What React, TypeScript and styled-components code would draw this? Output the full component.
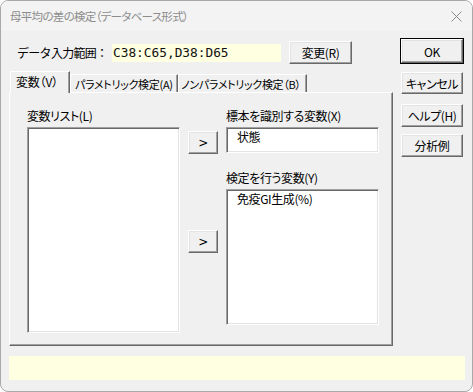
import React from "react";
import styled, { createGlobalStyle, css } from "styled-components";

const Global = createGlobalStyle`
  html, body { margin: 0; padding: 0; background: #ffffff; }
  * { box-sizing: border-box; }
`;

const FONT = `"Noto Sans CJK JP", "Noto Sans", sans-serif`;

const Window = styled.div`
  width: 473px;
  height: 392px;
  border: 1px solid #a9a9a9;
  border-radius: 8px;
  background: #f0f0f0;
  overflow: hidden;
  display: flex;
  flex-direction: column;
  font-family: ${FONT};
  font-feature-settings: "palt";
  color: #000;
`;

const TitleBar = styled.div`
  height: 30px;
  flex: none;
  display: flex;
  align-items: center;
  justify-content: space-between;
  padding: 0 10px 0 9px;
  background: #f3f3f3;
`;

const Title = styled.span`
  font-size: 11.5px;
  color: #8c8c8c;
  letter-spacing: -0.7px;
`;

const CloseIcon = styled.svg`
  width: 11px;
  height: 11px;
  flex: none;
`;

const Body = styled.div`
  flex: 1;
  display: grid;
  grid-template-columns: 384px 62px;
  column-gap: 8px;
  padding: 8px 0 0 8px;
`;

const MainCol = styled.div`
  display: flex;
  flex-direction: column;
`;

const RangeRow = styled.div`
  display: flex;
  align-items: center;
  height: 23px;
  margin-top: 2px;
  padding-left: 8px;
`;

const RangeLabel = styled.span`
  font-size: 12px;
  letter-spacing: -0.7px;
  font-feature-settings: normal;
  width: 95px;
  flex: none;
`;

const RangeValue = styled.div`
  width: 169px;
  height: 18px;
  flex: none;
  background: #ffffe1;
  padding-left: 1px;
  font-family: "DejaVu Sans Mono", "Liberation Mono", monospace;
  font-size: 12.8px;
  line-height: 18px;
  color: #111;
  white-space: nowrap;
  overflow: hidden;
`;

const bevel = css`
  border: 1px solid;
  border-color: #ffffff #696969 #696969 #ffffff;
  box-shadow: inset -1px -1px 0 #a0a0a0, inset 1px 1px 0 #e3e3e3;
  background: #f0f0f0;
`;

const Button = styled.button<{ $w?: number; $h?: number; $default?: boolean }>`
  ${bevel};
  width: ${(p) => p.$w ?? 62}px;
  height: ${(p) => p.$h ?? 23}px;
  padding: 0;
  font-family: ${FONT};
  font-feature-settings: "palt";
  font-size: 12px;
  letter-spacing: -0.4px;
  color: #000;
  display: flex;
  align-items: center;
  justify-content: center;
  ${(p) =>
    p.$default &&
    css`
      outline: 1px solid #000;
      outline-offset: 0;
    `}
`;

const ChangeButton = styled(Button)`
  margin-left: 8px;
`;

const TabStrip = styled.div`
  display: flex;
  align-items: flex-end;
  height: 21px;
  margin-top: 7px;
  padding-left: 1px;
  position: relative;
  z-index: 1;
`;

const Tab = styled.div<{ $w: number; $pl: number; $active?: boolean }>`
  width: ${(p) => p.$w}px;
  height: 18px;
  font-size: 11px;
  letter-spacing: -0.3px;
  display: flex;
  align-items: center;
  padding-left: ${(p) => p.$pl}px;
  border-left: 1px solid #ffffff;
  border-top: 1px solid #ffffff;
  border-right: 1px solid #696969;
  box-shadow: inset -1px 0 0 #a0a0a0;
  background: #f0f0f0;
  white-space: nowrap;
  overflow: hidden;
  ${(p) =>
    p.$active &&
    css`
      margin-bottom: -1px;
      height: 22px;
      padding-bottom: 2px;
      font-size: 12px;
      letter-spacing: -0.2px;
    `}
`;

const Panel = styled.div`
  height: 254px;
  border-top: 1px solid #ffffff;
  border-left: 1px solid #ffffff;
  border-right: 1px solid #696969;
  border-bottom: 1px solid #696969;
  box-shadow: inset -1px -1px 0 #a0a0a0;
  display: flex;
  padding: 15px 0 0 17px;
`;

const Column = styled.div<{ $w: number }>`
  width: ${(p) => p.$w}px;
  display: flex;
  flex-direction: column;
`;

const Label = styled.div<{ $mt?: number }>`
  font-size: 12px;
  letter-spacing: -0.4px;
  height: 19px;
  line-height: 15px;
  margin-top: ${(p) => p.$mt ?? 0}px;
  white-space: nowrap;
`;

const ListBox = styled.div<{ $h: number }>`
  height: ${(p) => p.$h}px;
  background: #ffffff;
  border-top: 1px solid #a0a0a0;
  border-left: 1px solid #a0a0a0;
  border-right: 1px solid #ffffff;
  border-bottom: 1px solid #ffffff;
  box-shadow: inset 1px 1px 0 #696969, inset -1px -1px 0 #e3e3e3;
  padding: 1px 0 0 10px;
  font-size: 12px;
  letter-spacing: -0.4px;
  line-height: 15px;
`;

const MoveCol = styled.div`
  width: 30px;
  margin: 0 8px;
  display: flex;
  flex-direction: column;
  padding-top: 23px;
  gap: 76px;
`;

const SideCol = styled.div`
  display: flex;
  flex-direction: column;
`;

const SideButton = styled(Button)<{ $mt: number }>`
  margin-top: ${(p) => p.$mt}px;
`;

const StatusBar = styled.div`
  height: 24px;
  margin: 10px 7px 11px 8px;
  background: #ffffe1;
`;

const Arrow = styled.span`
  font-family: "DejaVu Sans", sans-serif;
  font-size: 12px;
  line-height: 1;
`;

export default function App() {
  return (
    <>
      <Global />
      <Window>
        <TitleBar>
          <Title>母平均の差の検定（データベース形式）</Title>
          <CloseIcon viewBox="0 0 11 11">
            <path d="M0.5 0.5 L10.5 10.5 M10.5 0.5 L0.5 10.5" stroke="#8a8a8a" strokeWidth="1" fill="none" />
          </CloseIcon>
        </TitleBar>
        <Body>
          <MainCol>
            <RangeRow>
              <RangeLabel>データ入力範囲：</RangeLabel>
              <RangeValue>C38:C65,D38:D65</RangeValue>
              <ChangeButton $w={63} $h={23}>変更(R)</ChangeButton>
            </RangeRow>
            <TabStrip>
              <Tab $w={60} $pl={5} $active>変数（V）</Tab>
              <Tab $w={108} $pl={4}>パラメトリック検定(A)</Tab>
              <Tab $w={129} $pl={2}>ノンパラメトリック検定（B）</Tab>
            </TabStrip>
            <Panel>
              <Column $w={153}>
                <Label>変数リスト(L)</Label>
                <ListBox $h={206} />
              </Column>
              <MoveCol>
                <Button $w={30} $h={23}><Arrow>&gt;</Arrow></Button>
                <Button $w={30} $h={23}><Arrow>&gt;</Arrow></Button>
              </MoveCol>
              <Column $w={153}>
                <Label>標本を識別する変数(X)</Label>
                <ListBox $h={26}>状態</ListBox>
                <Label $mt={17}>検定を行う変数(Y)</Label>
                <ListBox $h={136}>免疫GI生成(%)</ListBox>
              </Column>
            </Panel>
          </MainCol>
          <SideCol>
            <SideButton $mt={0} $h={24} $default>OK</SideButton>
            <SideButton $mt={9} $h={22}>キャンセル</SideButton>
            <SideButton $mt={10} $h={23}>ヘルプ(H)</SideButton>
            <SideButton $mt={7} $h={23}>分析例</SideButton>
          </SideCol>
        </Body>
        <StatusBar />
      </Window>
    </>
  );
}
